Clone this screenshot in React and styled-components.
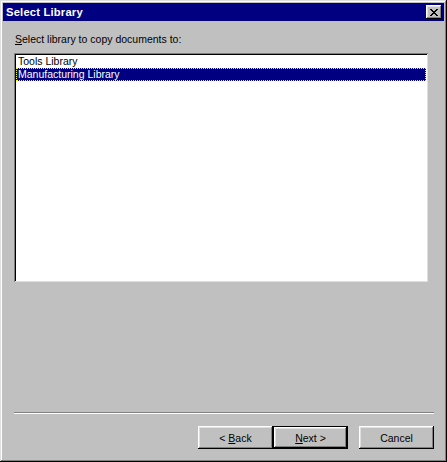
import React, { useState } from "react";
import styled, { createGlobalStyle } from "styled-components";

const GlobalStyle = createGlobalStyle`
  html, body {
    margin: 0;
    padding: 0;
    background: #c0c0c0;
  }
  body {
    font-family: "Liberation Sans", Arial, sans-serif;
    font-size: 10.5px;
  }
`;

const Window = styled.div`
  width: 447px;
  height: 462px;
  box-sizing: border-box;
  padding: 3px;
  background: #c0c0c0;
  display: flex;
  flex-direction: column;
  box-shadow: inset -1px -1px #000, inset 1px 1px #dfdfdf,
    inset -2px -2px #808080, inset 2px 2px #fff;
`;

const TitleBar = styled.div`
  height: 18px;
  background: #000080;
  display: flex;
  align-items: center;
  justify-content: space-between;
  padding: 0 2px 0 3px;
`;

const Title = styled.span`
  color: #fff;
  font-weight: bold;
  font-size: 11.2px;
  letter-spacing: 0.2px;
`;

const CloseButton = styled.button`
  width: 16px;
  height: 14px;
  padding: 0;
  border: none;
  background: #c0c0c0;
  display: flex;
  align-items: center;
  justify-content: center;
  box-shadow: inset -1px -1px #000, inset 1px 1px #fff,
    inset -2px -2px #808080, inset 2px 2px #dfdfdf;
`;

const Content = styled.div`
  flex: 1;
  display: flex;
  flex-direction: column;
  padding: 0 10px 0 11px;
`;

const Label = styled.div`
  margin-top: 12px;
  padding-left: 1px;
  height: 13px;
  line-height: 13px;
  color: #000;
`;

const Hotkey = styled.span`
  text-decoration: underline;
  text-underline-offset: 1px;
`;

const ListBox = styled.ul`
  list-style: none;
  margin: 7px 0 0;
  width: 414px;
  height: 229px;
  box-sizing: border-box;
  padding: 2px;
  background: #fff;
  box-shadow: inset 1px 1px #808080, inset -1px -1px #dfdfdf,
    inset 2px 2px #000, inset -2px -2px #fff;
`;

const ListItem = styled.li`
  height: 13px;
  line-height: 11px;
  box-sizing: border-box;
  padding: 0 1px;
  border: 1px dotted ${(p) => (p.$selected ? "#ffff00" : "transparent")};
  background: ${(p) => (p.$selected ? "#000080" : "transparent")};
  color: ${(p) => (p.$selected ? "#fff" : "#000")};
  white-space: nowrap;
  cursor: default;
`;

const Separator = styled.div`
  margin-top: 130px;
  height: 2px;
  width: 420px;
  box-shadow: inset 0 1px #808080, inset 0 -1px #fff;
`;

const ButtonRow = styled.div`
  margin-top: 12px;
  display: flex;
  justify-content: flex-end;
`;

const Button = styled.button`
  width: 75px;
  height: 23px;
  padding: 0;
  margin-left: ${(p) => p.$gap || 0}px;
  border: ${(p) => (p.$default ? "1px solid #000" : "none")};
  box-sizing: border-box;
  background: #c0c0c0;
  font-family: "Liberation Sans", Arial, sans-serif;
  font-size: 10.5px;
  color: #000;
  box-shadow: inset -1px -1px #000, inset 1px 1px #fff,
    inset -2px -2px #808080, inset 2px 2px #dfdfdf;
`;

const libraries = ["Tools Library", "Manufacturing Library"];

function CloseGlyph() {
  return (
    <svg width="8" height="7" viewBox="0 0 8 7" shapeRendering="crispEdges">
      <path
        d="M0 0h2v1h-2zM6 0h2v1h-2zM1 1h2v1h-2zM5 1h2v1h-2zM2 2h4v1h-4zM3 3h2v1h-2zM2 4h4v1h-4zM1 5h2v1h-2zM5 5h2v1h-2zM0 6h2v1h-2zM6 6h2v1h-2z"
        fill="#000"
      />
    </svg>
  );
}

export default function App() {
  const [selected, setSelected] = useState(1);

  return (
    <>
      <GlobalStyle />
      <Window>
        <TitleBar>
          <Title>Select Library</Title>
          <CloseButton>
            <CloseGlyph />
          </CloseButton>
        </TitleBar>
        <Content>
          <Label>
            <Hotkey>S</Hotkey>elect library to copy documents to:
          </Label>
          <ListBox>
            {libraries.map((name, i) => (
              <ListItem
                key={name}
                $selected={i === selected}
                onClick={() => setSelected(i)}
              >
                {name}
              </ListItem>
            ))}
          </ListBox>
          <Separator />
          <ButtonRow>
            <Button>
              &lt; <Hotkey>B</Hotkey>ack
            </Button>
            <Button $default>
              <Hotkey>N</Hotkey>ext &gt;
            </Button>
            <Button $gap={11}>Cancel</Button>
          </ButtonRow>
        </Content>
      </Window>
    </>
  );
}
